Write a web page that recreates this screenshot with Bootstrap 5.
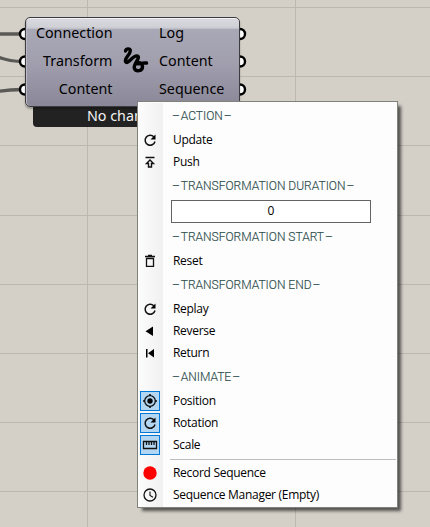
<!DOCTYPE html>
<html lang="en">
<head>
<meta charset="utf-8">
<meta name="viewport" content="width=device-width, initial-scale=1">
<title>Transform component</title>
<link href="https://cdn.jsdelivr.net/npm/bootstrap@5.3.0/dist/css/bootstrap.min.css" rel="stylesheet">
<style>
body{width:430px;height:527px;background:#d4d0c8;font-family:"Open Sans","Noto Sans",sans-serif;color:#000}
.wires{left:0;top:0}
.node{left:25px;top:17px;width:215px;height:90px;border:1.5px solid #3c3c40;border-radius:5px;background:linear-gradient(#d9d9df 0,#d0d0d7 9px,#c0c0c9 10.5px,#a9a8b6 11px,#a19fae 45px,#8a8898 100%);box-shadow:inset 0 1px 0 #f2f2f5,inset 1px 0 0 #bbbac5,0 2px 2px #0004;font:14.3px/28px "Noto Sans",sans-serif;padding-top:.6px}
.ins{width:86.500px}
.outs{left:133px;top:.6px}
.squig{left:97px;top:28px}
.status{left:33px;top:104px;width:200px;height:23px;background:#222;border-radius:4px;color:#f4f4f4;font:14.3px/24px "Noto Sans",sans-serif;padding-left:54px}
.ctx{left:137px;top:101px;width:261px;height:407px;border:1px solid #80827c;background:linear-gradient(90deg,#fcfcfc 0,#f0f0f0 24px,#fdfdfd 24px) 1px 1px no-repeat #fdfdfd;padding:1px;box-shadow:4px 4px 3px -1px #0009;font-size:12px}
.ctx .entry{height:22px;line-height:22px;white-space:nowrap;letter-spacing:-.29px}
.glyph{width:20px;height:20px;margin:1px 13px 1px 1px;flex:none}
.glyph svg{display:block;width:20px;height:20px}
.glyph.checked{background:#b3d7f3;outline:1px solid #0078d7;outline-offset:-1px}
.head{height:26px;line-height:26px;padding-left:33px;font-family:Roboto,sans-serif;font-size:12px;color:#2f4f4f;font-weight:300;white-space:nowrap;word-spacing:-2px;-webkit-text-stroke:.15px #2f4f4f}
.head span{word-spacing:0}
.field-row{height:25px;padding:1px 0 0 32px}
.num{width:200px;height:23px;border:1px solid #646464;background:#fff;line-height:19px}
.split{height:6px;padding:3px 0 0 31px}
.split div{height:1px;background:#bdbdbd;width:226px}
</style>
<script src="https://cdn.jsdelivr.net/npm/bootstrap@5.3.0/dist/js/bootstrap.bundle.min.js"></script>
</head>
<body class="position-relative overflow-hidden m-0">
<svg class="wires position-absolute" width="430" height="527" fill="none">
  <path d="M0 7.5H430M0 76.5H430M0 145.5H430M0 215.5H430M0 284.5H430M0 353.5H430M0 422.5H430M0 491.5H430M87.5 0V527M295.5 0V527" stroke="#bbb8b0"/>
  <path d="M0 34H22M-2 57C6 60 12 61.500 22 61.500M-2 91.500C6 90 12 89.500 22 89.500" stroke="#5a5955" stroke-width="3.400"/>
  <g fill="#fff" stroke="#000" stroke-width="2.400"><circle cx="25" cy="34" r="5"/><circle cx="25" cy="61.500" r="5"/><circle cx="25" cy="89.500" r="5"/><circle cx="240" cy="34" r="5"/><circle cx="240" cy="61.500" r="5"/><circle cx="240" cy="89.500" r="5"/></g>
</svg>
<div class="status position-absolute">No changes</div>
<section class="node position-absolute">
  <div class="ins text-end"><div>Connection</div><div>Transform</div><div>Content</div></div>
  <svg class="squig position-absolute" width="28" height="30" fill="none" stroke="#000" stroke-width="3.400" stroke-linecap="round" stroke-linejoin="round"><path d="M2.500 5C3 2.500 7.500 1.800 7.300 5C7 9 1.500 12 2.500 15.500C5 19.500 10 8.500 14.500 10C18 12 9.500 18 11.500 22.500C13 26 19.500 25.500 19.500 20.500C19 16.500 14.500 15.500 13.500 17.500C15 18.500 18 16.500 23.500 17"/></svg>
  <div class="outs position-absolute"><div>Log</div><div>Content</div><div>Sequence</div></div>
</section>
<nav class="ctx position-absolute d-flex flex-column">
  <div class="head">– <span>ACTION</span> –</div>
  <div class="entry d-flex"><span class="glyph"><svg viewBox="0 0 20 20"><path d="M13.800 6.800A5 5 0 1 0 15 11.500" fill="none" stroke="#111" stroke-width="1.500"/><path d="M15.500 4.500V9.500H10.500Z"/></svg></span>Update</div>
  <div class="entry d-flex"><span class="glyph"><svg viewBox="0 0 20 20"><path d="M5.500 5.500H14.500M10 8L6.500 11.500H8.500V15H11.500V11.500H13.500Z" fill="none" stroke="#111" stroke-width="1.400"/></svg></span>Push</div>
  <div class="head">– <span>TRANSFORMATION DURATION</span> –</div>
  <div class="field-row"><div class="num text-center">0</div></div>
  <div class="head">– <span>TRANSFORMATION START</span> –</div>
  <div class="entry d-flex"><span class="glyph"><svg viewBox="0 0 20 20"><path d="M5 5.500H15M8 4.500H12M6.500 7.500H13.500V15.300H6.500Z" fill="none" stroke="#111" stroke-width="1.300"/></svg></span>Reset</div>
  <div class="head">– <span>TRANSFORMATION END</span> –</div>
  <div class="entry d-flex"><span class="glyph"><svg viewBox="0 0 20 20"><path d="M13.800 6.800A5 5 0 1 0 15 11.500" fill="none" stroke="#111" stroke-width="1.500"/><path d="M15.500 4.500V9.500H10.500Z"/></svg></span>Replay</div>
  <div class="entry d-flex"><span class="glyph"><svg viewBox="0 0 20 20"><path d="M13 5.500V15L5.500 10.300Z"/></svg></span>Reverse</div>
  <div class="entry d-flex"><span class="glyph"><svg viewBox="0 0 20 20"><path d="M6 6H7.500V14.500H6ZM14 6V14.500L8 10.200Z"/></svg></span>Return</div>
  <div class="head">– <span>ANIMATE</span> –</div>
  <div class="entry d-flex"><span class="glyph checked"><svg viewBox="0 0 20 20"><circle cx="10" cy="10" r="5.300" fill="none" stroke="#111" stroke-width="1.300"/><circle cx="10" cy="10" r="2.700"/><path d="M10 3V5M10 15V17M3 10H5M15 10H17" stroke="#111" stroke-width="1.600"/></svg></span>Position</div>
  <div class="entry d-flex"><span class="glyph checked"><svg viewBox="0 0 20 20"><path d="M13.800 6.800A5 5 0 1 0 15 11.500" fill="none" stroke="#111" stroke-width="1.500"/><path d="M15.500 4.500V9.500H10.500Z"/></svg></span>Rotation</div>
  <div class="entry d-flex"><span class="glyph checked"><svg viewBox="0 0 20 20"><path d="M3.500 6.500H16.500V13.500H3.500ZM6.500 7V10M9 7V10M11.500 7V10M14 7V10" fill="none" stroke="#111" stroke-width="1.300"/></svg></span>Scale</div>
  <div class="split"><div></div></div>
  <div class="entry d-flex"><span class="glyph"><svg viewBox="0 0 20 20"><circle cx="10" cy="10" r="6.700" fill="#f00"/></svg></span>Record Sequence</div>
  <div class="entry d-flex"><span class="glyph"><svg viewBox="0 0 20 20"><path d="M10 6.500V10.500L13 12.200" fill="none" stroke="#111" stroke-width="1.100"/><circle cx="10" cy="10" r="6" fill="none" stroke="#111" stroke-width="1.300"/></svg></span>Sequence Manager (Empty)</div>
</nav>
</body>
</html>
